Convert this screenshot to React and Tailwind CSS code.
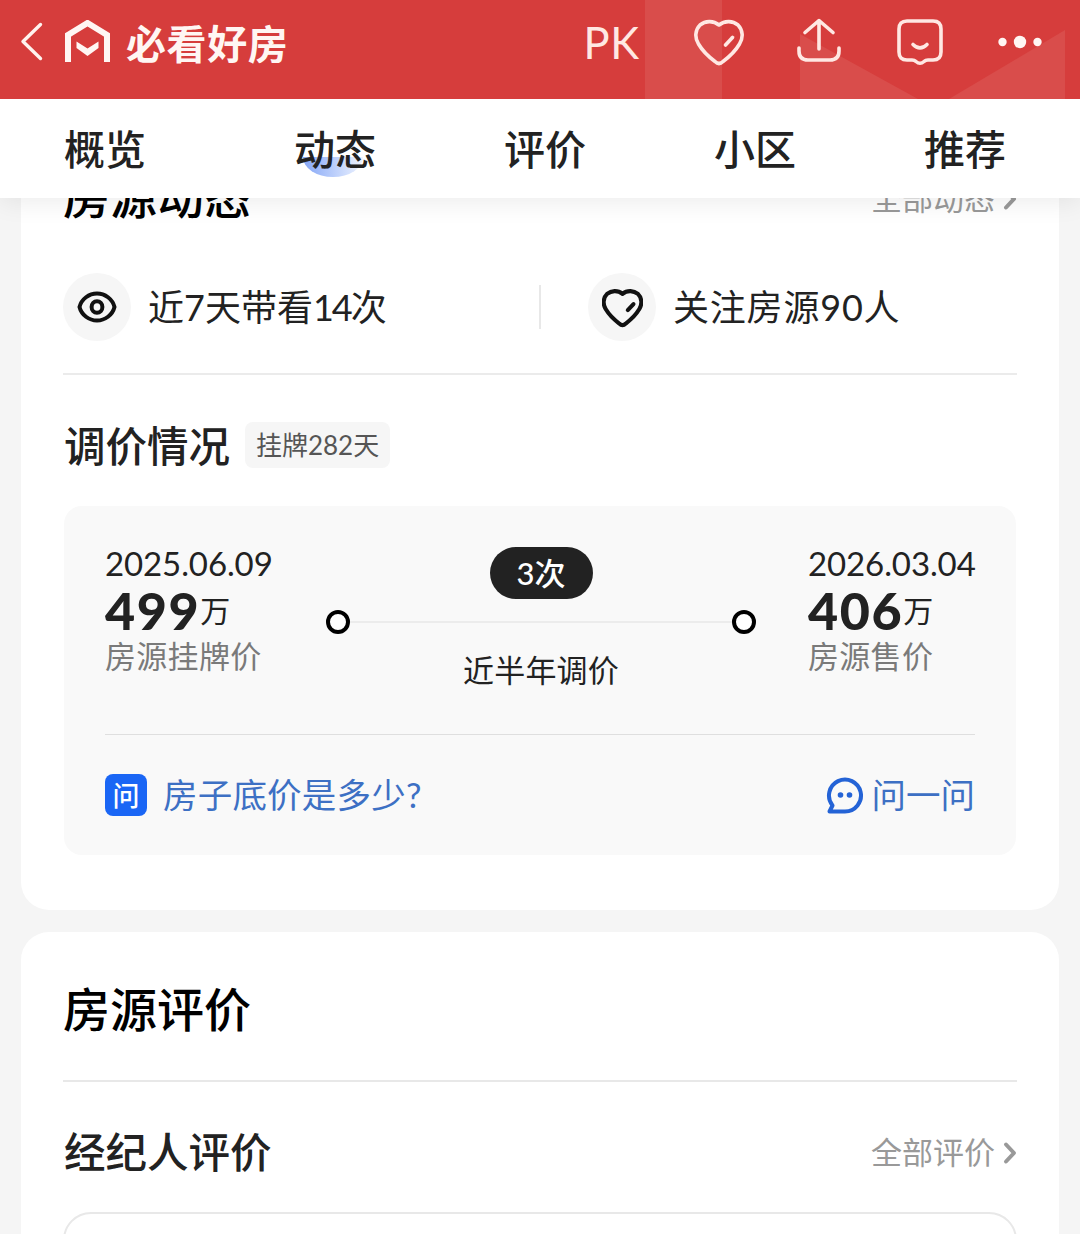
const tabs = ["动态", "评价", "小区", "推荐"];

function HeaderPattern() {
  return (
    <svg className="absolute inset-0" width="1080" height="99" viewBox="0 0 1080 99" fill="#d94d4b">
      <path d="M645 0H722V99H645Z" />
      <path d="M800 34L918 99H800Z" />
      <path d="M949 99L1065 30V99Z" />
    </svg>
  );
}

function HeartIcon({ className, strokeWidth }) {
  return (
    <svg className={className} viewBox="0 0 50 48" fill="none" stroke="currentColor" strokeWidth={strokeWidth} strokeLinecap="round" strokeLinejoin="round">
      <path d="M25 6C19 1 11 2 6 6C1 11 .5 19 4.500 25C8 31 15 38 21 42.500Q25 46.500 29 42.500C35 38 42 31 45.500 25C49.500 19 49 11 44 6C39 2 31 1 25 6Z" />
      <path d="M31.500 26L38.500 18.500" />
    </svg>
  );
}

function Header() {
  return (
    <header className="relative z-20 h-[99px] shrink-0 bg-[#d63d3c] text-white">
      <HeaderPattern />
      <div className="relative flex h-[86px] items-center pl-5">
        <svg className="-mt-1" width="24" height="40" viewBox="0 0 24 40" fill="none" stroke="#fff3ef" strokeWidth="3.4" strokeLinecap="round" strokeLinejoin="round">
          <path d="M20.500 3.500L3 20.500L20.500 37.500" />
        </svg>
        <svg className="ml-5" width="47" height="46" viewBox="0 0 47 46" fill="none" stroke="#fff6f3" strokeWidth="6">
          <path d="M4 42V15L23.500 3L43 15V42" />
          <path d="M12.500 21.500L23.500 28.500L34.500 21.500V28L23.500 36L12.500 28Z" fill="#fff6f3" stroke="none" />
        </svg>
        <span className="mt-0.5 ml-[15px] text-[40px] leading-none font-bold tracking-[0.6px] text-[#fff6f3]">必看好房</span>
        <span className="ml-auto text-[43.500px] leading-none tracking-[0.8px] text-[#ffe8e3]">PK</span>
        <HeartIcon className="ml-[53px] h-12 w-[52px] text-[#ffe8e3]" strokeWidth="3.6" />
        <svg className="ml-[51px] -mt-0.5" width="46" height="48" viewBox="0 0 46 48" fill="none" stroke="#ffe8e3" strokeWidth="3.6" strokeLinecap="round" strokeLinejoin="round">
          <path d="M23 31V2.500M9 14.500L23 2.500L37 14.500" />
          <path d="M3 30V33Q3 42 12 42H34Q43 42 43 33V30" />
        </svg>
        <svg className="ml-[54px] -mt-0.5" width="48" height="48" viewBox="0 0 48 48" fill="none" stroke="#ffe8e3" strokeWidth="3.6" strokeLinecap="round" strokeLinejoin="round">
          <path d="M11 3H37Q45 3 45 11V34Q45 42 37 42H32Q29.500 42 28 43.500Q24 47 20 43.500Q18.500 42 16 42H11Q3 42 3 34V11Q3 3 11 3Z" />
          <path d="M17 26.500Q24 33.500 31 26.500" />
        </svg>
        <svg className="mr-[37px] ml-[53px] -mt-0.5" width="46" height="14" viewBox="0 0 46 14" fill="#fff6f3">
          <circle cx="5.500" cy="7" r="4.200" />
          <circle cx="23" cy="7" r="6.200" />
          <circle cx="40.500" cy="7" r="4.200" />
        </svg>
      </div>
    </header>
  );
}

function TabBar() {
  return (
    <nav className="relative z-10 flex h-[99px] shrink-0 items-center justify-between bg-white pt-0.5 pr-[74px] pl-16 text-[41px] leading-none font-medium text-[#222] shadow-[0_4px_24px_rgba(0,0,0,0.08)]">
      <span className="mr-5">概览</span>
      {tabs.map((tab, i) => (
        <div key={tab} className="relative">
          {i === 0 && <div className="absolute top-[28px] left-[9px] h-5 w-[60px] rounded-b-[50%_100%] bg-linear-to-r from-[#86a6f5] to-[#eef3fe]" />}
          <span className="relative">{tab}</span>
        </div>
      ))}
    </nav>
  );
}

function MoreLink({ label }) {
  return (
    <div className="mt-px flex items-center text-[31px] leading-none text-[#999]">
      {label}
      <svg className="ml-2" width="14" height="24" viewBox="0 0 14 24" fill="none" stroke="currentColor" strokeWidth="4" strokeLinecap="round" strokeLinejoin="round">
        <path d="M3 3.500L11 12L3 20.500" />
      </svg>
    </div>
  );
}

function Stat({ icon, children }) {
  return (
    <div className="flex items-center">
      <div className="flex size-[68px] items-center justify-center rounded-full bg-[#f6f6f6] text-[#111]">{icon}</div>
      <span className="ml-[17px] text-[36px] leading-none text-[#222]">{children}</span>
    </div>
  );
}

function PricePoint({ date, price, label }) {
  return (
    <div className="text-[#222]">
      <div className="h-8 text-[33px] leading-8 tracking-[-0.1px]">{date}</div>
      <div className="mt-[7px] flex h-12 leading-[48px]">
        <span className="text-[52px] font-black tracking-[1.6px]">{price}</span>
        <span className="text-[30px]">万</span>
      </div>
      <div className="mt-1.5 h-8 text-[31px] leading-8 tracking-[0.3px] text-[#7a7a7a]">{label}</div>
    </div>
  );
}

function Timeline() {
  return (
    <div className="flex w-[430px] shrink-0 flex-col items-center text-[#222]">
      <div className="flex h-[52px] w-[103px] items-center justify-center rounded-full bg-[#222] text-[31px] leading-none font-medium text-white">3次</div>
      <div className="mt-[11px] flex w-full items-center">
        <div className="size-6 rounded-full border-4 border-black bg-white" />
        <div className="h-0.5 flex-1 bg-[#ececec]" />
        <div className="size-6 rounded-full border-4 border-black bg-white" />
      </div>
      <div className="mt-5 text-[31px] leading-8 tracking-[0.2px]">近半年调价</div>
    </div>
  );
}

function PricePanel() {
  return (
    <div className="mx-px mt-[38px] h-[349px] rounded-[18px] bg-[#f9f9f9] px-[41px] pt-[41px]">
      <div className="flex h-[146px]">
        <div className="w-[221px] shrink-0">
          <PricePoint date="2025.06.09" price="499" label="房源挂牌价" />
        </div>
        <Timeline />
        <div className="ml-[52px] shrink-0">
          <PricePoint date="2026.03.04" price="406" label="房源售价" />
        </div>
      </div>
      <div className="mt-[41px] h-px bg-[#dfdfdf]" />
      <div className="mt-[39px] flex h-[42px] items-center text-[34.500px] leading-none text-[#3d70c4]">
        <span className="flex size-[42px] items-center justify-center rounded-lg bg-[#1a66f5] text-[27px] font-medium text-white">问</span>
        <span className="ml-4 tracking-[0.2px]">房子底价是多少?</span>
        <svg className="ml-auto" width="38" height="38" viewBox="0 0 38 38" fill="none" stroke="#2463d6" strokeWidth="4" strokeLinejoin="round">
          <path d="M19 35.500H3.500L6.500 29.500A16 16 0 1 1 19 35.500Z" />
          <circle cx="14.500" cy="19" r="2.800" fill="#2463d6" stroke="none" />
          <circle cx="23.500" cy="19" r="2.800" fill="#2463d6" stroke="none" />
        </svg>
        <span className="ml-2">问一问</span>
      </div>
    </div>
  );
}

export default function App() {
  return (
    <div className="flex h-[1234px] w-[1080px] flex-col overflow-hidden bg-[#f5f5f5] font-['Lato','Noto_Sans_CJK_SC',sans-serif]">
      <Header />
      <TabBar />
      <main className="flex-1 overflow-hidden px-[21px]">
        <section className="-mt-6 h-[736px] rounded-b-[28px] bg-white px-[42px]">
          <div className="flex h-12 items-center justify-between">
            <h2 className="-mt-1 text-[47px] leading-none font-medium text-black">房源动态</h2>
            <MoreLink label="全部动态" />
          </div>
          <div className="mt-[51px] flex h-[68px] items-center">
            <div className="w-[476px]">
              <Stat
                icon={
                  <svg width="40" height="34" viewBox="0 0 40 34" fill="none" stroke="currentColor" strokeWidth="4" strokeLinejoin="round">
                    <path d="M2.500 17C4.500 9 12 3.500 20 3.500S35.500 9 37.500 17C35.500 25 28 30.500 20 30.500S4.500 25 2.500 17Z" />
                    <ellipse cx="20" cy="17" rx="5.400" ry="5.800" />
                  </svg>
                }
              >
                近7天带看<span className="tracking-[-2px]">14</span>次
              </Stat>
            </div>
            <div className="h-11 w-0.5 bg-[#e8e8e8]" />
            <div className="ml-[47px]">
              <Stat icon={<HeartIcon className="mt-0.5 h-[39px] w-[41px]" strokeWidth="5" />}>
                <span className="tracking-[0.8px]">关注房源90人</span>
              </Stat>
            </div>
          </div>
          <div className="mt-8 h-0.5 bg-[#ebebeb]" />
          <div className="mt-[47px] flex h-[46px] items-center">
            <h3 className="mt-[3px] ml-px text-[41.500px] leading-none font-medium text-[#222]">调价情况</h3>
            <span className="ml-[15px] flex h-[46px] w-[145px] items-center justify-center rounded-lg bg-[#f6f6f6] text-[26px] leading-none text-[#555]">挂牌282天</span>
          </div>
          <PricePanel />
        </section>

        <section className="mt-[22px] h-[400px] rounded-t-[28px] bg-white px-[42px] pt-[53px]">
          <h2 className="h-12 text-[47px] leading-[48px] font-medium text-black">房源评价</h2>
          <div className="mt-[47px] h-0.5 bg-[#e8e8e8]" />
          <div className="mt-[48px] flex h-[44px] items-center justify-between">
            <h3 className="mt-0.5 ml-px text-[41.500px] leading-none font-medium text-[#222]">经纪人评价</h3>
            <MoreLink label="全部评价" />
          </div>
          <div className="mt-[38px] h-40 rounded-t-[28px] border-2 border-[#e8e8e8]" />
        </section>
      </main>
    </div>
  );
}
